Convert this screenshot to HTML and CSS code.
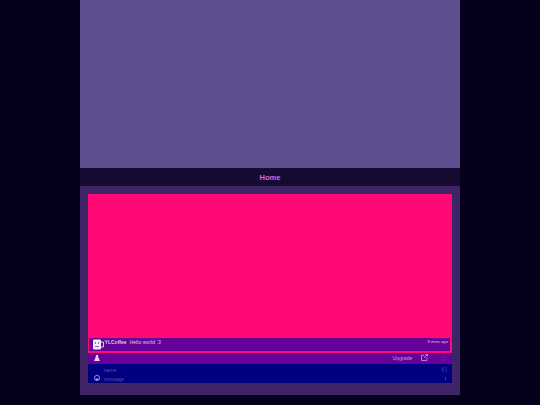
FILE: index.html
```html
<!DOCTYPE html>
<html lang="en">
<head>
<meta charset="utf-8">
<title>Home</title>
<link rel="stylesheet" href="styles.css">
</head>
<body>
<div class="page">
  <div class="banner"></div>
  <nav class="nav"><a class="nav-link">Home</a></nav>
  <main class="content">
    <div class="chatbox">
      <div class="messages">
        <div class="message">
          <svg class="avatar" viewBox="0 0 11 11" width="11" height="11">
            <rect x="0" y="0.5" width="8" height="10" rx="1" fill="#f2eef6"/>
            <path d="M8 3h1.6a1 1 0 0 1 1 1v3a1 1 0 0 1-1 1H8" fill="none" stroke="#d8d0e4" stroke-width="1.1"/>
            <rect x="2" y="3" width="1" height="2" fill="#8a6aa8"/>
            <rect x="5" y="3" width="1" height="2" fill="#8a6aa8"/>
            <rect x="2" y="7" width="4" height="1" fill="#8a6aa8"/>
          </svg>
          <span class="text"><span class="nick">YLCoffee</span> Hello world :3</span>
          <span class="time">9 mins ago</span>
        </div>
      </div>
      <div class="toolbar">
        <svg class="user-icon" viewBox="0 0 6 6" width="6" height="6"><path d="M2 0h2l.4 2.4L6 6H0l1.6-3.6z" fill="#f0c8f0"/></svg>
        <span class="upgrade">Upgrade</span>
        <svg class="ext-icon" viewBox="0 0 7 7" width="7" height="7"><path d="M3.5 1.2H.5v5.3h5.3V3.6M3 4l3.4-3.4M4.4.5h2.1v2.1" fill="none" stroke="#d0b8e4" stroke-width=".7"/></svg>
        <span class="ring"></span>
      </div>
      <div class="inputs">
        <div class="input-row"><span class="field">name</span><svg class="end-icon" viewBox="0 0 6 5" width="6" height="5"><path d="M0 2.5 2.5.5v4zM4 .5h1.6v4H4" fill="none" stroke="#3a3098" stroke-width=".7"/></svg></div>
        <div class="input-row">
          <svg class="smile" viewBox="0 0 6 6" width="6" height="6"><circle cx="3" cy="3" r="2.6" fill="none" stroke="#b8b0d8" stroke-width=".8"/><path d="M1.5 3.5h3a1.5 1.5 0 0 1-3 0z" fill="#b8b0d8"/></svg>
          <span class="field">message</span><span class="send"></span>
        </div>
      </div>
    </div>
  </main>
</div>
</body>
</html>
```
FILE: styles.css
```css
* { box-sizing: border-box; }
html, body { margin: 0; height: 100%; }
body {
  background: #05011a;
  font-family: "Liberation Sans", Arial, sans-serif;
  overflow: hidden;
}
.page { width: 380px; margin: 0 auto; }
.banner { height: 168px; background: #5f4f8f; }
.nav {
  height: 18px;
  background: #150a30;
  display: flex;
  align-items: center;
  justify-content: center;
}
.nav-link { color: #d268e4; font-size: 7.6px; font-weight: 700; font-family: "Liberation Sans", sans-serif; }
.content { height: 209px; background: #3f2468; padding: 8px 8.5px 12px 8.3px; }
.chatbox { display: flex; flex-direction: column; height: 189px; }
.messages {
  height: 158.5px;
  background: #ff0a74;
  padding: 0 1.5px 2px 1px;
  display: flex;
  flex-direction: column;
  justify-content: flex-end;
}
.message {
  height: 13px;
  background: #650098;
  display: flex;
  align-items: flex-start;
  padding: 1px 2px 0 3.3px;
  color: #d8c8e8;
  font-size: 5.2px;
  line-height: 6px;
}
.avatar { margin-right: 1px; flex: none; }
.text { flex: 1; }
.nick { font-weight: 700; font-size: 5px; margin-right: 1.5px; }
.time { font-size: 4.2px; line-height: 5px; color: #d8c8e8; }
.toolbar {
  height: 11.5px;
  background: #650098;
  display: flex;
  align-items: center;
  padding: 0 6px;
  color: #b8a0d0;
  font-size: 5.2px;
}
.user-icon { flex: none; }
.upgrade { margin-left: auto; margin-right: -.5px; }
.ext-icon { margin-left: 9px; flex: none; margin-top: -1px; }
.ring {
  width: 5px;
  height: 5px;
  border-radius: 50%;
  border: 1px solid #6f1a9e;
  margin-left: 12.5px;
  margin-right: 0;
}
.inputs { height: 19px; background: #000080; padding: 1px 6px 0 6px; }
.input-row { height: 9px; display: flex; align-items: center; color: #5a50a0; font-size: 5px; padding-left: 9.5px; position: relative; }
.field { flex: 1; }
.smile { position: absolute; left: 0; top: 1px; }
.end-icon { flex: none; margin-right: -1px; }
.send { width: 1px; height: 3px; background: #4a3ca0; margin-right: 0; }
```
